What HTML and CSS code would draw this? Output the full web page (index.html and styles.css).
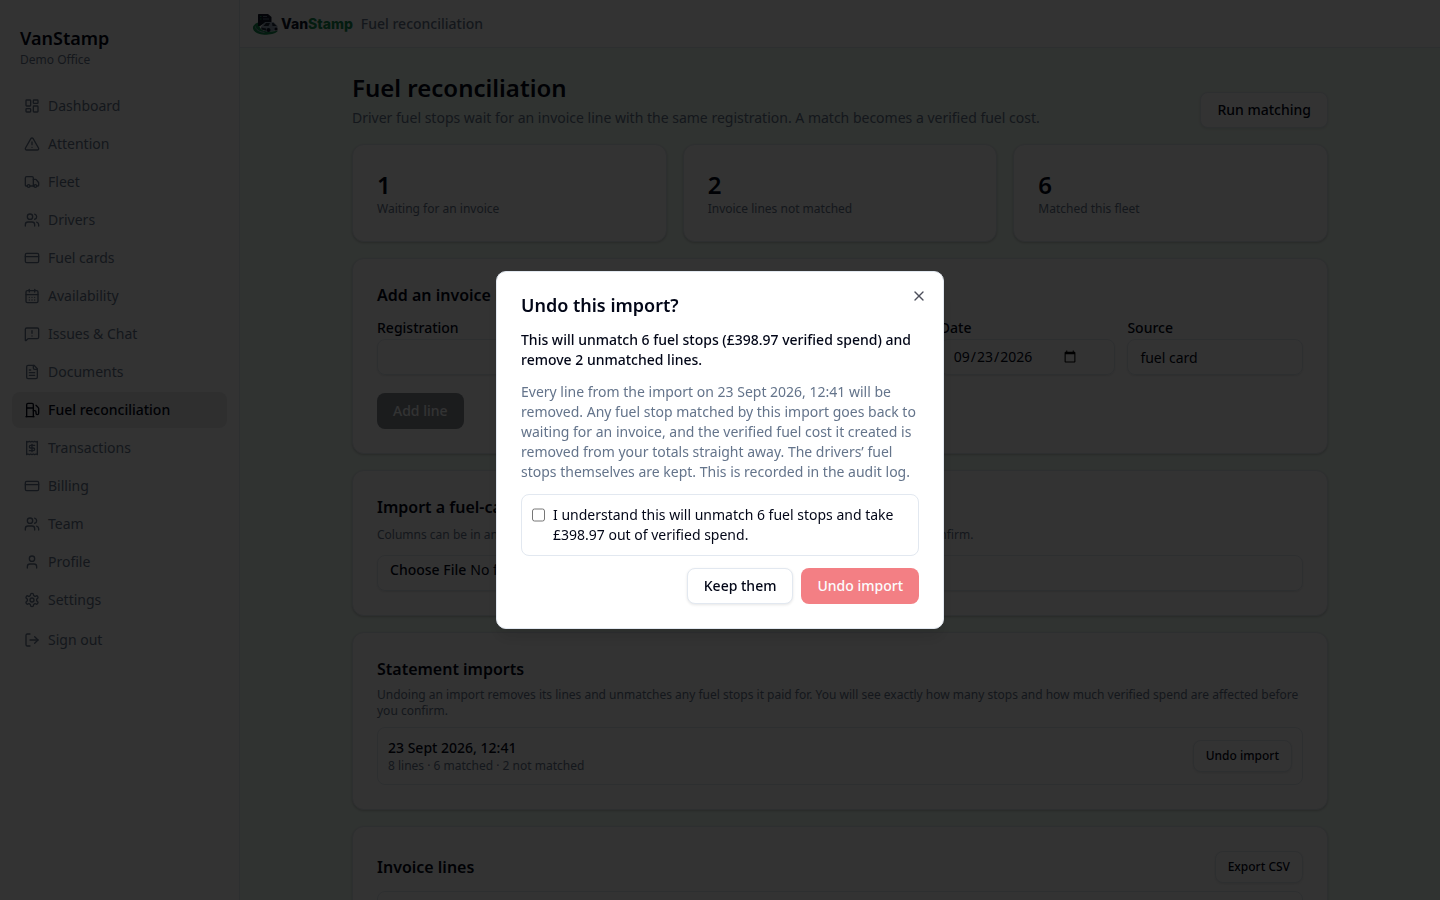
FILE: index.html
```html
<!DOCTYPE html>
<html lang="en">
<head>
    <meta charset="UTF-8">
    <meta name="viewport" content="width=device-width, initial-scale=1.0">
    <title>Fuel reconciliation - VanStamp</title>
    <link rel="stylesheet" href="styles.css">
</head>
<body>
    <div class="app">
        <!-- Sidebar -->
        <aside class="sidebar">
            <div class="brand">
                <p class="brand-name">VanStamp</p>
                <p class="brand-office">Demo Office</p>
            </div>
            <nav class="nav">
                <a class="nav-item" href="#">
                    <svg class="icon" viewBox="0 0 24 24"><rect width="7" height="9" x="3" y="3" rx="1"/><rect width="7" height="5" x="14" y="3" rx="1"/><rect width="7" height="9" x="14" y="12" rx="1"/><rect width="7" height="5" x="3" y="16" rx="1"/></svg>
                    Dashboard
                </a>
                <a class="nav-item" href="#">
                    <svg class="icon" viewBox="0 0 24 24"><path d="m21.73 18-8-14a2 2 0 0 0-3.48 0l-8 14A2 2 0 0 0 4 21h16a2 2 0 0 0 1.73-3"/><path d="M12 9v4"/><path d="M12 17h.01"/></svg>
                    Attention
                </a>
                <a class="nav-item" href="#">
                    <svg class="icon" viewBox="0 0 24 24"><path d="M14 18V6a2 2 0 0 0-2-2H4a2 2 0 0 0-2 2v11a1 1 0 0 0 1 1h2"/><path d="M15 18H9"/><path d="M19 18h2a1 1 0 0 0 1-1v-3.65a1 1 0 0 0-.22-.624l-3.48-4.35A1 1 0 0 0 17.52 8H14"/><circle cx="17" cy="18" r="2"/><circle cx="7" cy="18" r="2"/></svg>
                    Fleet
                </a>
                <a class="nav-item" href="#">
                    <svg class="icon" viewBox="0 0 24 24"><path d="M16 21v-2a4 4 0 0 0-4-4H6a4 4 0 0 0-4 4v2"/><circle cx="9" cy="7" r="4"/><path d="M22 21v-2a4 4 0 0 0-3-3.87"/><path d="M16 3.13a4 4 0 0 1 0 7.75"/></svg>
                    Drivers
                </a>
                <a class="nav-item" href="#">
                    <svg class="icon" viewBox="0 0 24 24"><rect width="20" height="14" x="2" y="5" rx="2"/><path d="M2 10h20"/></svg>
                    Fuel cards
                </a>
                <a class="nav-item" href="#">
                    <svg class="icon" viewBox="0 0 24 24"><path d="M8 2v4"/><path d="M16 2v4"/><rect width="18" height="18" x="3" y="4" rx="2"/><path d="M3 10h18"/><path d="M8 14h.01"/><path d="M12 14h.01"/><path d="M16 14h.01"/><path d="M8 18h.01"/><path d="M12 18h.01"/><path d="M16 18h.01"/></svg>
                    Availability
                </a>
                <a class="nav-item" href="#">
                    <svg class="icon" viewBox="0 0 24 24"><path d="M22 17a2 2 0 0 1-2 2H6.828a2 2 0 0 0-1.414.586l-2.202 2.202A.71.71 0 0 1 2 21.286V5a2 2 0 0 1 2-2h16a2 2 0 0 1 2 2z"/><path d="M12 7v4"/><path d="M12 15h.01"/></svg>
                    Issues &amp; Chat
                </a>
                <a class="nav-item" href="#">
                    <svg class="icon" viewBox="0 0 24 24"><path d="M15 2H6a2 2 0 0 0-2 2v16a2 2 0 0 0 2 2h12a2 2 0 0 0 2-2V7Z"/><path d="M14 2v4a2 2 0 0 0 2 2h4"/><path d="M10 9H8"/><path d="M16 13H8"/><path d="M16 17H8"/></svg>
                    Documents
                </a>
                <a class="nav-item active" href="#" aria-current="page">
                    <svg class="icon" viewBox="0 0 24 24"><path d="M3 22h12"/><path d="M4 9h10"/><path d="M14 22V4a2 2 0 0 0-2-2H6a2 2 0 0 0-2 2v18"/><path d="M14 13h2a2 2 0 0 1 2 2v2a2 2 0 0 0 4 0V9.83a2 2 0 0 0-.59-1.42L18 5"/></svg>
                    Fuel reconciliation
                </a>
                <a class="nav-item" href="#">
                    <svg class="icon" viewBox="0 0 24 24"><path d="M4 2v20l2-1 2 1 2-1 2 1 2-1 2 1 2-1 2 1V2l-2 1-2-1-2 1-2-1-2 1-2-1-2 1Z"/><path d="M16 8h-6a2 2 0 1 0 0 4h4a2 2 0 1 1 0 4H8"/><path d="M12 17.5v-11"/></svg>
                    Transactions
                </a>
                <a class="nav-item" href="#">
                    <svg class="icon" viewBox="0 0 24 24"><rect width="20" height="14" x="2" y="5" rx="2"/><path d="M2 10h20"/></svg>
                    Billing
                </a>
                <a class="nav-item" href="#">
                    <svg class="icon" viewBox="0 0 24 24"><path d="M16 21v-2a4 4 0 0 0-4-4H6a4 4 0 0 0-4 4v2"/><circle cx="9" cy="7" r="4"/><path d="M22 21v-2a4 4 0 0 0-3-3.87"/><path d="M16 3.13a4 4 0 0 1 0 7.75"/></svg>
                    Team
                </a>
                <a class="nav-item" href="#">
                    <svg class="icon" viewBox="0 0 24 24"><path d="M19 21v-2a4 4 0 0 0-4-4H9a4 4 0 0 0-4 4v2"/><circle cx="12" cy="7" r="4"/></svg>
                    Profile
                </a>
                <a class="nav-item" href="#">
                    <svg class="icon" viewBox="0 0 24 24"><path d="M12.22 2h-.44a2 2 0 0 0-2 2v.18a2 2 0 0 1-1 1.73l-.43.25a2 2 0 0 1-2 0l-.15-.08a2 2 0 0 0-2.73.73l-.22.38a2 2 0 0 0 .73 2.73l.15.1a2 2 0 0 1 1 1.72v.51a2 2 0 0 1-1 1.74l-.15.09a2 2 0 0 0-.73 2.73l.22.38a2 2 0 0 0 2.73.73l.15-.08a2 2 0 0 1 2 0l.43.25a2 2 0 0 1 1 1.73V20a2 2 0 0 0 2 2h.44a2 2 0 0 0 2-2v-.18a2 2 0 0 1 1-1.73l.43-.25a2 2 0 0 1 2 0l.15.08a2 2 0 0 0 2.73-.73l.22-.39a2 2 0 0 0-.73-2.73l-.15-.08a2 2 0 0 1-1-1.74v-.5a2 2 0 0 1 1-1.74l.15-.09a2 2 0 0 0 .73-2.73l-.22-.38a2 2 0 0 0-2.73-.73l-.15.08a2 2 0 0 1-2 0l-.43-.25a2 2 0 0 1-1-1.73V4a2 2 0 0 0-2-2z"/><circle cx="12" cy="12" r="3"/></svg>
                    Settings
                </a>
            </nav>
            <button type="button" class="nav-item sign-out">
                <svg class="icon" viewBox="0 0 24 24"><path d="M9 21H5a2 2 0 0 1-2-2V5a2 2 0 0 1 2-2h4"/><path d="m16 17 5-5-5-5"/><path d="M21 12H9"/></svg>
                Sign out
            </button>
        </aside>

        <div class="content">
            <header class="topbar">
                <div class="logo">
                    <svg class="logo-mark" viewBox="0 0 28 24">
                        <path fill="#148a50" d="M8 10C3 11 .5 13.500 1 16.500c.6 4 7 6.300 13.500 6.200 5.500-.1 10-1.700 11.500-4.200-4 1-9 1.500-13 .6-4.500-1.100-7-4.600-5-9.100z"/>
                        <path fill="#0f172a" d="M6 3c0-.6.4-1 1-1h9l3.500 3v6h-7L8 14H6z"/>
                        <path stroke="#64748b" stroke-width="1" d="M11 4.500h4M11 7h6"/>
                        <path stroke="#148a50" stroke-width="1" d="M8 4.500h1.500M8 7h1.500"/>
                        <path fill="#94a3b8" d="M9 15l4-5h8.500l4 4v4l-10 2L9 17.500z"/>
                        <path fill="#1e293b" d="m14 11-2.500 3h5l1.500-3zM9.500 15.500l4.500 1v2l-4.500-1zM20 11h1.500l3 3h-4z"/>
                        <circle fill="#0f172a" cx="16.500" cy="18" r="2"/>
                        <circle fill="#0f172a" cx="24" cy="17" r="1.500"/>
                        <path fill="none" stroke="#94a3b8" stroke-width="1" d="M3.500 14.500c0 3 4 5.500 9 5.900"/>
                    </svg>
                    <span class="logo-text">Van<span class="logo-accent">Stamp</span></span>
                </div>
                <span class="topbar-title">Fuel reconciliation</span>
            </header>

            <main class="main">
                <div class="page-head">
                    <div>
                        <h1>Fuel reconciliation</h1>
                        <p class="page-sub">Driver fuel stops wait for an invoice line with the same registration. A match becomes a verified fuel cost.</p>
                    </div>
                    <button type="button" class="btn">Run matching</button>
                </div>

                <!-- Totals -->
                <div class="stats">
                    <div class="card">
                        <p class="stat-value">1</p>
                        <p class="hint">Waiting for an invoice</p>
                    </div>
                    <div class="card">
                        <p class="stat-value">2</p>
                        <p class="hint">Invoice lines not matched</p>
                    </div>
                    <div class="card">
                        <p class="stat-value">6</p>
                        <p class="hint">Matched this fleet</p>
                    </div>
                </div>

                <!-- Add invoice line -->
                <section class="card">
                    <h2>Add an invoice line</h2>
                    <form class="line-form">
                        <div class="fields">
                            <div class="field">
                                <label for="registration">Registration</label>
                                <input type="text" id="registration">
                            </div>
                            <div class="field">
                                <label for="litres">Litres</label>
                                <input type="text" id="litres">
                            </div>
                            <div class="field">
                                <label for="amount">Amount</label>
                                <input type="text" id="amount">
                            </div>
                            <div class="field">
                                <label for="date">Date</label>
                                <input type="date" id="date" value="2026-09-23">
                            </div>
                            <div class="field">
                                <label for="source">Source</label>
                                <input type="text" id="source" value="fuel card">
                            </div>
                        </div>
                        <button type="submit" class="btn btn-primary" disabled>Add line</button>
                    </form>
                </section>

                <!-- Import statement -->
                <section class="card">
                    <h2>Import a fuel-card statement</h2>
                    <p class="hint import-hint">Columns can be in any order. Each line is checked against your fleet and shown to you before you confirm.</p>
                    <input type="file" id="statement" class="file" aria-label="Statement file">
                </section>

                <!-- Previous imports -->
                <section class="card">
                    <h2>Statement imports</h2>
                    <p class="hint list-hint">Undoing an import removes its lines and unmatches any fuel stops it paid for. You will see exactly how many stops and how much verified spend are affected before you confirm.</p>
                    <div class="import">
                        <div>
                            <p class="import-date">23 Sept 2026, 12:41</p>
                            <p class="hint">8 lines · 6 matched · 2 not matched</p>
                        </div>
                        <button type="button" class="btn btn-small">Undo import</button>
                    </div>
                </section>

                <!-- Invoice lines -->
                <section class="card">
                    <div class="card-head">
                        <h2>Invoice lines</h2>
                        <button type="button" class="btn btn-small">Export CSV</button>
                    </div>
                    <div class="table-wrap">
                        <table>
                            <thead>
                                <tr>
                                    <th>Date</th>
                                    <th>Registration</th>
                                    <th>Litres</th>
                                    <th>Amount</th>
                                    <th>Status</th>
                                </tr>
                            </thead>
                        </table>
                    </div>
                </section>
            </main>
        </div>
    </div>

    <!-- Undo dialog -->
    <div class="overlay">
        <div class="dialog" role="dialog" aria-modal="true" aria-labelledby="dialogTitle">
            <h2 class="dialog-title" id="dialogTitle">Undo this import?</h2>
            <p class="dialog-lead">This will unmatch 6 fuel stops (£398.97 verified spend) and remove 2 unmatched lines.</p>
            <p class="dialog-text">Every line from the import on 23 Sept 2026, 12:41 will be removed. Any fuel stop matched by this import goes back to waiting for an invoice, and the verified fuel cost it created is removed from your totals straight away. The drivers’ fuel stops themselves are kept. This is recorded in the audit log.</p>
            <label class="confirm" for="understand">
                <input type="checkbox" id="understand">
                <span>I understand this will unmatch 6 fuel stops and take £398.97 out of verified spend.</span>
            </label>
            <div class="dialog-actions">
                <button type="button" class="btn">Keep them</button>
                <button type="button" class="btn btn-danger" disabled>Undo import</button>
            </div>
            <button type="button" class="dialog-close" aria-label="Close">
                <svg class="icon" viewBox="0 0 24 24"><path d="M18 6 6 18"/><path d="m6 6 12 12"/></svg>
            </button>
        </div>
    </div>
</body>
</html>
```
FILE: styles.css
```css
* {
    box-sizing: border-box;
}

body {
    margin: 0;
    font-family: "Noto Sans", sans-serif;
    font-size: 14px;
    line-height: 20px;
    color: #020617;
    background-color: #f0fdf4;
    overflow: hidden;
}

h1, h2, p {
    margin: 0;
}

h1 {
    font-size: 24px;
    line-height: 32px;
    font-weight: 600;
}

h2 {
    font-size: 16px;
    line-height: 24px;
    font-weight: 600;
}

button, input {
    font: inherit;
    color: inherit;
}

.app {
    display: flex;
    height: 100vh;
}

.icon {
    width: 16px;
    height: 16px;
    flex-shrink: 0;
    fill: none;
    stroke: currentColor;
    stroke-width: 2;
    stroke-linecap: round;
    stroke-linejoin: round;
}

/* Sidebar */
.sidebar {
    width: 240px;
    flex-shrink: 0;
    padding: 24px 12px;
    background-color: #fff;
    border-right: 1px solid #e2e8f0;
}

.brand {
    padding: 0 8px;
    margin-bottom: 20px;
}

.brand-name {
    font-size: 18px;
    line-height: 28px;
    font-weight: 600;
}

.brand-office {
    font-size: 12px;
    line-height: 16px;
    color: #64748b;
}

.nav {
    display: flex;
    flex-direction: column;
    gap: 2px;
}

.nav-item {
    display: flex;
    align-items: center;
    gap: 8px;
    width: 100%;
    padding: 8px 12px;
    border: none;
    border-radius: 8px;
    background: none;
    color: #64748b;
    text-align: left;
    text-decoration: none;
    cursor: pointer;
}

.nav-item.active {
    background-color: #e8e8ea;
    color: #020617;
    font-weight: 500;
}

.sign-out {
    margin-top: 4px;
}

/* Top bar */
.content {
    flex: 1;
    min-width: 0;
    overflow: hidden;
}

.topbar {
    display: flex;
    align-items: center;
    gap: 8px;
    height: 48px;
    padding: 0 12px;
    background-color: #fff;
    border-bottom: 1px solid #e2e8f0;
}

.logo {
    display: flex;
    align-items: center;
    gap: 1px;
}

.logo-mark {
    width: 28px;
    height: 24px;
}

.logo-text {
    font-family: Inter, sans-serif;
    font-size: 14px;
    font-weight: 800;
    color: #0f172a;
}

.logo-accent {
    color: #148a50;
}

.topbar-title {
    font-weight: 500;
    color: #64748b;
}

/* Page */
.main {
    display: flex;
    flex-direction: column;
    gap: 16px;
    max-width: 1024px;
    margin: 0 auto;
    padding: 24px;
}

.page-head {
    display: flex;
    align-items: flex-end;
    justify-content: space-between;
    gap: 12px;
}

.page-sub {
    margin-top: 4px;
    color: #64748b;
}

.hint {
    font-size: 12px;
    line-height: 16px;
    color: #64748b;
}

.card {
    padding: 24px;
    background-color: #fff;
    border: 1px solid #e2e8f0;
    border-radius: 12px;
    box-shadow: 0 1px 3px rgba(0, 0, 0, 0.1), 0 1px 2px rgba(0, 0, 0, 0.1);
}

.card-head {
    display: flex;
    align-items: center;
    justify-content: space-between;
}

.stats {
    display: grid;
    grid-template-columns: repeat(3, 1fr);
    gap: 16px;
}

.stat-value {
    font-size: 24px;
    line-height: 32px;
    font-weight: 600;
}

/* Buttons */
.btn {
    height: 36px;
    padding: 0 16px;
    border: 1px solid #e2e8f0;
    border-radius: 8px;
    background-color: #fff;
    box-shadow: 0 1px 3px rgba(0, 0, 0, 0.1);
    font-weight: 500;
    white-space: nowrap;
    cursor: pointer;
}

.btn:disabled {
    opacity: 0.5;
    cursor: default;
}

.btn-primary {
    border: none;
    background-color: #0f172a;
    box-shadow: none;
    color: #f8fafc;
}

.btn-danger {
    border: none;
    background-color: #e7000b;
    box-shadow: none;
    color: #f8fafc;
}

.btn-small {
    height: 32px;
    padding: 0 12px;
    font-size: 12px;
    line-height: 16px;
}

/* Forms */
.line-form {
    margin-top: 10px;
}

.fields {
    display: grid;
    grid-template-columns: repeat(5, 1fr);
    gap: 12px;
    margin-bottom: 18px;
}

.field label {
    display: block;
    line-height: 22px;
    font-weight: 500;
}

.field input, .file {
    display: flex;
    width: 100%;
    height: 36px;
    padding: 4px 12px;
    border: 1px solid #e2e8f0;
    border-radius: 8px;
    background-color: transparent;
    box-shadow: 0 1px 2px rgba(0, 0, 0, 0.1);
}

.file::file-selector-button {
    padding: 0;
    margin: 0 4px 0 0;
    border: none;
    background: transparent;
    font: inherit;
    font-weight: 500;
    color: inherit;
}

.import-hint {
    margin: 8px 0 12px;
}

.list-hint {
    margin: 6px 0 8px;
}

.import {
    display: flex;
    align-items: center;
    justify-content: space-between;
    padding: 10px;
    border: 1px solid #e2e8f0;
    border-radius: 8px;
}

.import-date {
    font-weight: 500;
}

.table-wrap {
    margin-top: 8px;
    border: 1px solid #e2e8f0;
    border-radius: 8px;
}

table {
    width: 100%;
    border-collapse: collapse;
}

th {
    padding: 16px 12px;
    text-align: left;
    font-weight: 500;
    color: #64748b;
}

/* Dialog */
.overlay {
    position: fixed;
    inset: 0;
    display: flex;
    align-items: center;
    justify-content: center;
    background-color: rgba(0, 0, 0, 0.8);
}

.dialog {
    position: relative;
    width: 100%;
    max-width: 448px;
    padding: 24px;
    background-color: #fff;
    border: 1px solid #e2e8f0;
    border-radius: 10px;
    box-shadow: 0 10px 15px rgba(0, 0, 0, 0.1);
}

.dialog-title {
    margin-bottom: 16px;
    font-size: 18px;
    line-height: 18px;
}

.dialog-lead {
    margin-bottom: 12px;
    font-weight: 500;
}

.dialog-text {
    margin-bottom: 12px;
    color: #64748b;
}

.confirm {
    display: flex;
    align-items: flex-start;
    gap: 8px;
    margin-bottom: 12px;
    padding: 10px;
    border: 1px solid #e2e8f0;
    border-radius: 8px;
}

.confirm input {
    flex-shrink: 0;
    width: 13px;
    height: 14px;
    margin: 3px 0 0;
}

.dialog-actions {
    display: flex;
    justify-content: flex-end;
    gap: 8px;
}

.dialog-close {
    position: absolute;
    top: 16px;
    right: 16px;
    display: flex;
    padding: 0;
    border: none;
    background: none;
    opacity: 0.7;
    cursor: pointer;
}
```
